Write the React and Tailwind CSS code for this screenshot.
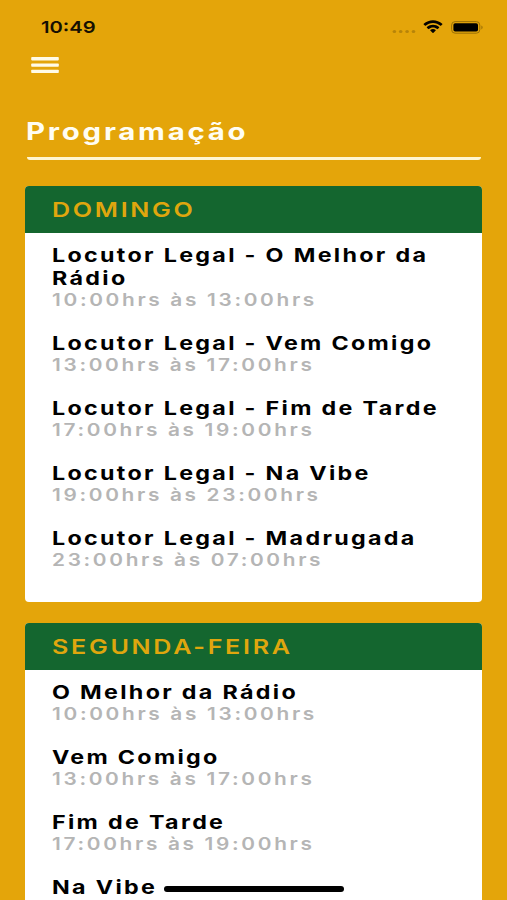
const days = [
  {
    name: 'DOMINGO',
    shows: [
      { title: ['Locutor Legal - O Melhor da', 'Rádio'], time: '10:00hrs às 13:00hrs' },
      { title: ['Locutor Legal - Vem Comigo'], time: '13:00hrs às 17:00hrs' },
      { title: ['Locutor Legal - Fim de Tarde'], time: '17:00hrs às 19:00hrs' },
      { title: ['Locutor Legal - Na Vibe'], time: '19:00hrs às 23:00hrs' },
      { title: ['Locutor Legal - Madrugada'], time: '23:00hrs às 07:00hrs' },
    ],
  },
  {
    name: 'SEGUNDA-FEIRA',
    shows: [
      { title: ['O Melhor da Rádio'], time: '10:00hrs às 13:00hrs' },
      { title: ['Vem Comigo'], time: '13:00hrs às 17:00hrs' },
      { title: ['Fim de Tarde'], time: '17:00hrs às 19:00hrs' },
      { title: ['Na Vibe'] },
    ],
  },
];

// Wide lettering: text is stretched horizontally from its left edge.
function Wide({ className = '', children }) {
  return (
    <span className={`block w-max origin-left scale-x-[1.2246] whitespace-nowrap ${className}`}>
      {children}
    </span>
  );
}

function StatusBar() {
  return (
    <div className="flex h-[54px] justify-between pl-[41px] pr-[24px]">
      <Wide className="mt-[17px] h-[21px] text-[16.5px] font-semibold leading-[21px] text-[#150f02]">10:49</Wide>
      <div className="mt-[20px] flex h-[14px]">
        <svg className="mt-[10px] h-[3px] w-[24px]" viewBox="0 0 24 3" fill="#b78409">
          <ellipse cx="2.4" cy="1.5" rx="1.8" ry="1.5" />
          <ellipse cx="8.7" cy="1.5" rx="1.8" ry="1.5" />
          <ellipse cx="15.1" cy="1.5" rx="1.8" ry="1.5" />
          <ellipse cx="21.5" cy="1.5" rx="1.8" ry="1.5" />
        </svg>
        <svg className="ml-[7px] h-[14px] w-[20px]" viewBox="0 0 17 12" preserveAspectRatio="none" fill="#050300">
          <path d="M8.5 2.5c2.4 0 4.6.9 6.3 2.5.1.1.3.1.4 0l1.2-1.2c.1-.1.1-.3 0-.5C12-.9 5-.9.6 3.3c-.1.2-.1.4 0 .5L1.8 5c.1.1.3.1.4 0C3.9 3.4 6.1 2.5 8.5 2.5Z" />
          <path d="M8.5 6.4c1.3 0 2.6.5 3.5 1.4.1.1.3.1.5 0l1.2-1.2c.1-.1.1-.3 0-.5-2.9-2.7-7.5-2.7-10.4 0-.1.2-.1.4 0 .5l1.2 1.2c.2.1.4.1.5 0 .9-.9 2.2-1.4 3.5-1.4Z" />
          <path d="M10.8 9c.1-.1.1-.3 0-.4-1.3-1.2-3.3-1.2-4.6 0-.1.1-.1.3 0 .4l2.1 2.1c.1.1.3.1.4 0Z" />
        </svg>
        <svg className="ml-[7px] h-[14px] w-[33px]" viewBox="0 0 33 14">
          <rect x="1.6" y="1.6" width="28.2" height="11.6" rx="3.5" fill="none" stroke="#9a7007" strokeWidth="1" />
          <rect x="3.4" y="3.2" width="24.6" height="8.4" rx="1.8" fill="#000" />
          <path d="M31.4 5.6c1.6.6 1.6 3.2 0 3.8Z" fill="#9a7007" />
        </svg>
      </div>
    </div>
  );
}

function DayCard({ day }) {
  return (
    <section className="h-[416px] shrink-0 overflow-hidden rounded-[4px] bg-white">
      <h2 className="h-[47px] bg-[#14662f] pl-[26.6px] pt-[12px]">
        <Wide className="text-[20.5px] font-semibold leading-[24px] tracking-[2.2px] text-[#dfa60e]">{day.name}</Wide>
      </h2>
      <ul className="flex flex-col gap-[21px] pl-[26.6px] pt-[11px]">
        {day.shows.map((show) => (
          <li key={show.title[0]}>
            {show.title.map((line) => (
              <Wide key={line} className="text-[19px] font-[650] leading-[23px] tracking-[1.89px] text-black">{line}</Wide>
            ))}
            {show.time && (
              <Wide className="text-[17px] font-semibold leading-[21px] tracking-[2.18px] text-[#b5b5b5]">{show.time}</Wide>
            )}
          </li>
        ))}
      </ul>
    </section>
  );
}

export default function App() {
  return (
    <div className="relative h-[900px] w-[507px] overflow-hidden bg-[#e4a50a] font-['Inter','Liberation_Sans',sans-serif]">
      <StatusBar />
      <button className="ml-[31px] mt-[3px] block h-[16px] w-[28px]" aria-label="Menu">
        <svg className="block h-[16px] w-[28px]" viewBox="0 0 28 16" fill="#fffbe8">
          <rect x="0.2" y="0.1" width="27.6" height="3.3" rx="0.8" />
          <rect x="0.2" y="6.5" width="27.6" height="3.3" rx="0.8" />
          <rect x="0.2" y="12.7" width="27.6" height="3.3" rx="0.8" />
        </svg>
      </button>
      <h1 className="ml-[26px] mt-[44px]">
        <Wide className="text-[24px] font-bold leading-[30px] tracking-[2.25px] text-[#fffdf3]">Programação</Wide>
      </h1>
      <div className="ml-[27px] mt-[10px] h-[3px] w-[454px] rounded-b-[3px] bg-[#fff6d0]" />
      <main className="ml-[25.4px] mt-[26px] flex w-[457px] flex-col gap-[21px]">
        {days.map((day) => (
          <DayCard key={day.name} day={day} />
        ))}
      </main>
      <div className="absolute left-[164px] top-[886px] h-[5.5px] w-[180px] rounded-full bg-black" />
    </div>
  );
}
